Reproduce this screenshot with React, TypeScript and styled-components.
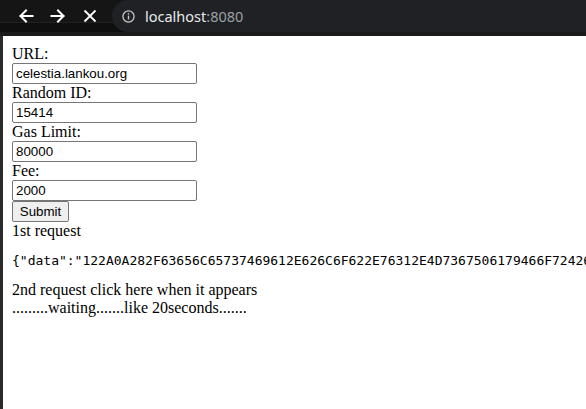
import React from "react";
import styled, { createGlobalStyle } from "styled-components";

const Global = createGlobalStyle`
  html, body { margin: 0; padding: 0; background: #ffffff; overflow: hidden; }
  #root { width: 586px; height: 409px; }
`;

const Shell = styled.div`
  display: flex;
  flex-direction: column;
  width: 586px;
  height: 409px;
  overflow: hidden;
`;

const BrowserBar = styled.div`
  display: flex;
  flex-direction: column;
  background: #141414;
`;

const Toolbar = styled.div`
  display: flex;
  align-items: center;
  height: 32px;
  padding-left: 10px;
  background: linear-gradient(#151515 0 22px, #222222 22px 23px, #0f0f0f 23px);
`;

const BarEdge = styled.div`
  height: 4px;
  background: #1a1a1a;
`;

const NavButton = styled.div`
  width: 32px;
  height: 32px;
  display: flex;
  align-items: center;
  justify-content: center;
  color: #ffffff;
`;

const AddressPill = styled.div`
  flex: 1;
  height: 32px;
  margin-left: 6px;
  display: flex;
  align-items: center;
  gap: 10px;
  padding-left: 10px;
  border-radius: 16px 0 0 16px;
  background: #202124;
  font-family: "Noto Sans", "Open Sans", sans-serif;
  font-size: 14.5px;
`;

const Host = styled.span`
  color: #e8eaed;
`;

const Port = styled.span`
  color: #9aa0a6;
`;

const Viewport = styled.div`
  flex: 1;
  border-left: 3px solid #2a2a2a;
  padding: 9px 8px 8px 9px;
  overflow: hidden;
  font-family: "Liberation Serif", "Times New Roman", serif;
  font-size: 16px;
  color: #000000;
  white-space: nowrap;
`;

const Form = styled.form`
  display: flex;
  flex-direction: column;
  align-items: flex-start;
  margin: 0;
`;

const Label = styled.label`
  display: block;
  line-height: 18px;
`;

const Field = styled.input`
  display: block;
  box-sizing: border-box;
  width: 185px;
  height: 21px;
  margin: 0;
  padding: 1px 3px;
  border: 1px solid #767676;
  border-radius: 2px;
  font-family: "Liberation Sans", Arial, sans-serif;
  font-size: 13.33px;
  color: #000000;
  background: #ffffff;
`;

const SubmitButton = styled.button`
  box-sizing: border-box;
  width: 57px;
  height: 21px;
  margin: 0;
  padding: 1px 6px;
  border: 1px solid #767676;
  border-radius: 2px;
  background: #efefef;
  font-family: "Liberation Sans", Arial, sans-serif;
  font-size: 13.33px;
  color: #000000;
`;

const Line = styled.div`
  line-height: 18px;
`;

const Response = styled.pre`
  margin: 13px 0;
  font-family: "DejaVu Sans Mono", monospace;
  font-size: 13px;
  line-height: 15px;
`;

const BackIcon = () => (
  <svg width="16" height="16" viewBox="0 0 16 16" fill="none" stroke="currentColor" strokeWidth="2" strokeLinecap="square">
    <path d="M2.5 8h12M8 2.5L2.5 8 8 13.5" />
  </svg>
);

const ForwardIcon = () => (
  <svg width="16" height="16" viewBox="0 0 16 16" fill="none" stroke="currentColor" strokeWidth="2" strokeLinecap="square">
    <path d="M1.5 8h12M8 2.5L13.5 8 8 13.5" />
  </svg>
);

const CloseIcon = () => (
  <svg width="14" height="14" viewBox="0 0 14 14" fill="none" stroke="currentColor" strokeWidth="1.8">
    <path d="M1.5 1.5l11 11M12.5 1.5l-11 11" />
  </svg>
);

const InfoIcon = () => (
  <svg width="13" height="13" viewBox="0 0 14 14" fill="none" stroke="#c4c7c5">
    <circle cx="7" cy="7" r="6" strokeWidth="1.4" />
    <path d="M7 6v4.2" strokeWidth="1.5" />
    <circle cx="7" cy="4" r="0.9" fill="#c4c7c5" stroke="none" />
  </svg>
);

const fields = [
  { label: "URL:", value: "celestia.lankou.org" },
  { label: "Random ID:", value: "15414" },
  { label: "Gas Limit:", value: "80000" },
  { label: "Fee:", value: "2000" },
];

export default function App() {
  return (
    <>
      <Global />
      <Shell>
        <BrowserBar>
          <Toolbar>
            <NavButton><BackIcon /></NavButton>
            <NavButton><ForwardIcon /></NavButton>
            <NavButton><CloseIcon /></NavButton>
            <AddressPill>
              <InfoIcon />
              <span>
                <Host>localhost</Host>
                <Port>:8080</Port>
              </span>
            </AddressPill>
          </Toolbar>
          <BarEdge />
        </BrowserBar>
        <Viewport>
          <Form onSubmit={(e) => e.preventDefault()}>
            {fields.map((f) => (
              <React.Fragment key={f.label}>
                <Label>{f.label}</Label>
                <Field defaultValue={f.value} />
              </React.Fragment>
            ))}
            <SubmitButton type="submit">Submit</SubmitButton>
          </Form>
          <Line>1st request</Line>
          <Response>{'{"data":"122A0A282F63656C65737469612E626C6F622E76312E4D7367506179466F72426C6F6273"}'}</Response>
          <Line>2nd request click here when it appears</Line>
          <Line>.........waiting.......like 20seconds.......</Line>
        </Viewport>
      </Shell>
    </>
  );
}
